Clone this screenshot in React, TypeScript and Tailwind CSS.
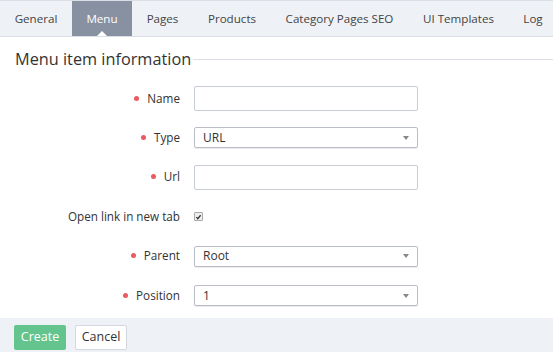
const tabs: [string, string][] = [
  ["General", "w-[72px]"],
  ["Menu", "w-[60px]"],
  ["Pages", "w-[61px]"],
  ["Products", "w-[78px]"],
  ["Category Pages SEO", "w-[137px]"],
  ["UI Templates", "w-[101px]"],
  ["Log", "w-[48px]"],
];

function Dot() {
  return <span className="mr-[8px] inline-block h-[5px] w-[5px] rounded-full bg-[#ea5b5f]" />;
}

function Row({
  label,
  required,
  tall,
  children,
}: {
  label: string;
  required?: boolean;
  tall?: boolean;
  children: React.ReactNode;
}) {
  return (
    <div className={tall ? "flex h-[40px] items-center" : "flex h-[39px] items-center"}>
      <div className="flex w-[180px] items-center justify-end text-[11.7px] text-[#333]">
        {required && <Dot />}
        <span>{label}</span>
      </div>
      <div className="ml-[14px]">{children}</div>
    </div>
  );
}

function TextInput() {
  return <div className="h-[25px] w-[224px] rounded-[2px] border border-[#c8ccd3] bg-white" />;
}

function Select({ value }: { value: string }) {
  return (
    <div className="flex h-[21px] w-[224px] items-center justify-between rounded-[2px] border border-[#b9bec6] bg-white pl-[8px] pr-[8px] text-[12px] text-[#333] shadow-[0_1px_0_rgba(0,0,0,0.08)]">
      <span>{value}</span>
      <span className="h-0 w-0 border-x-[3px] border-t-[4px] border-x-transparent border-t-[#888]" />
    </div>
  );
}

export default function App() {
  return (
    <div className="h-[352px] w-[553px] overflow-hidden bg-white font-['Open_Sans',sans-serif]">
      <div className="flex h-[37px] border-t border-b border-[#dadee5] bg-[#eef1f5]">
        {tabs.map(([t, w]) =>
          t === "Menu" ? (
            <div
              key={t}
              className={`relative flex shrink-0 items-center justify-center whitespace-nowrap bg-[#8891a1] pt-[1px] text-[11.6px] text-white ${w}`}
            >
              {t}
              <span className="absolute bottom-0 left-1/2 h-0 w-0 -translate-x-1/2 border-x-[5px] border-b-[5px] border-x-transparent border-b-white" />
            </div>
          ) : (
            <div
              key={t}
              className={`flex shrink-0 items-center justify-center whitespace-nowrap pt-[1px] text-[11.6px] text-[#444] ${w}`}
            >
              {t}
            </div>
          )
        )}
      </div>

      <div className="flex h-[42px] items-center pl-[15px] pt-[2px]">
        <span className="text-[16.3px] text-[#333]">Menu item information</span>
        <span className="ml-[2px] h-px flex-1 bg-[#dadee5]" />
      </div>

      <Row label="Name" required>
        <TextInput />
      </Row>
      <Row label="Type" required>
        <Select value="URL" />
      </Row>
      <Row label="Url" required tall>
        <TextInput />
      </Row>
      <Row label="Open link in new tab">
        <div className="flex h-[9px] w-[9px] items-center justify-center rounded-[1px] border border-[#aaa] bg-[#eee]">
          <svg viewBox="0 0 10 10" className="h-[8px] w-[8px]">
            <path d="M2 5.2 L4 7.4 L8 2.5" fill="none" stroke="#333" strokeWidth="1.8" />
          </svg>
        </div>
      </Row>
      <Row label="Parent" required tall>
        <Select value="Root" />
      </Row>
      <Row label="Position" required>
        <Select value="1" />
      </Row>

      <div className="mt-[3px] flex h-[34px] items-start gap-[9px] bg-[#eef1f5] pl-[14px] pt-[7px]">
        <button className="h-[25px] w-[52px] rounded-[2px] bg-[#63c48e] text-[12.5px] text-white">
          Create
        </button>
        <button className="h-[25px] w-[52px] rounded-[2px] border border-[#d4d8de] bg-white text-[12.5px] text-[#333]">
          Cancel
        </button>
      </div>
    </div>
  );
}
